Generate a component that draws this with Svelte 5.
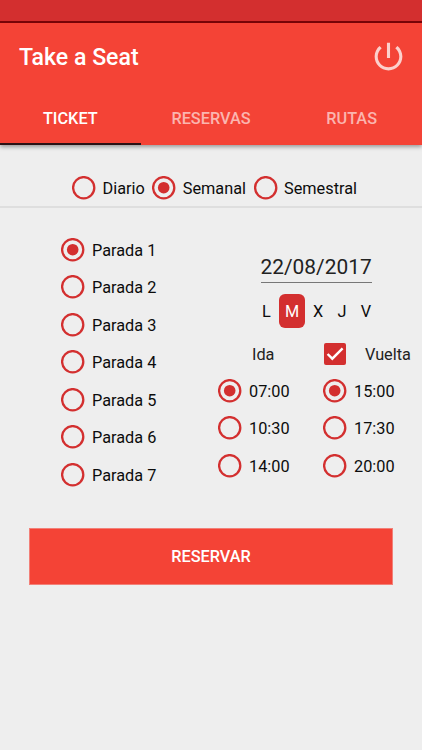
<script lang="ts">
	const tabs = ['TICKET', 'RESERVAS', 'RUTAS'];
	const periods = ['Diario', 'Semanal', 'Semestral'];
	const stops = [1, 2, 3, 4, 5, 6, 7].map((n) => `Parada ${n}`);
	const days = ['L', 'M', 'X', 'J', 'V'];
	const outbound = ['07:00', '10:30', '14:00'];
	const inbound = ['15:00', '17:30', '20:00'];

	let tab = $state('TICKET');
	let period = $state('Semanal');
	let stop = $state('Parada 1');
	let day = $state('M');
	let outboundTime = $state('07:00');
	let inboundTime = $state('15:00');
	let roundTrip = $state(true);
</script>

{#snippet radio(label: string, checked: boolean, select: () => void)}
	<button class="radio" role="radio" aria-checked={checked} onclick={select}>
		<svg class="radio-icon" viewBox="0 0 24 24" aria-hidden="true">
			<circle cx="11.7" cy="11.7" r="10.6" fill="none" stroke="currentColor" stroke-width="2.3" />
			{#if checked}
				<circle cx="11.7" cy="11.7" r="5.8" fill="currentColor" />
			{/if}
		</svg>
		<span class="radio-label">{label}</span>
	</button>
{/snippet}

<div class="screen">
	<div class="status-bar"></div>

	<header>
		<div class="toolbar">
			<h1>Take a Seat</h1>
			<button class="power" aria-label="Salir">
				<svg viewBox="0 0 24 24" fill="currentColor" aria-hidden="true">
					<path d="M13 3h-2v10h2V3zm4.83 2.17l-1.42 1.42C17.99 7.86 19 9.81 19 12c0 3.87-3.13 7-7 7s-7-3.13-7-7c0-2.19 1.01-4.14 2.58-5.42L6.17 5.17C4.23 6.82 3 9.26 3 12c0 4.97 4.03 9 9 9s9-4.03 9-9c0-2.74-1.23-5.18-3.17-6.83z" />
				</svg>
			</button>
		</div>
		<nav>
			{#each tabs as name}
				<button class="tab" class:active={tab === name} onclick={() => (tab = name)}>{name}</button>
			{/each}
		</nav>
	</header>

	<div class="periods" role="radiogroup">
		{#each periods as name}
			{@render radio(name, period === name, () => (period = name))}
		{/each}
	</div>

	<main>
		<div class="stops" role="radiogroup">
			{#each stops as name}
				{@render radio(name, stop === name, () => (stop = name))}
			{/each}
		</div>

		<div class="schedule">
			<div class="date">22/08/2017</div>

			<div class="days">
				{#each days as name}
					<button class="day" class:selected={day === name} onclick={() => (day = name)}>{name}</button>
				{/each}
			</div>

			<div class="trips">
				<div class="trip-title outbound">Ida</div>
				<button
					class="trip-title check"
					role="checkbox"
					aria-checked={roundTrip}
					onclick={() => (roundTrip = !roundTrip)}
				>
					<span class="box" class:checked={roundTrip}>
						{#if roundTrip}
							<svg viewBox="0 0 22 22" aria-hidden="true">
								<path d="M3.6 11l4.7 4.7L18.6 5.4" fill="none" stroke="#fff" stroke-width="2.4" />
							</svg>
						{/if}
					</span>
					<span class="check-label">Vuelta</span>
				</button>

				<div class="times" role="radiogroup">
					{#each outbound as time}
						{@render radio(time, outboundTime === time, () => (outboundTime = time))}
					{/each}
				</div>
				<div class="times" role="radiogroup">
					{#each inbound as time}
						{@render radio(time, inboundTime === time, () => (inboundTime = time))}
					{/each}
				</div>
			</div>
		</div>
	</main>

	<button class="submit">RESERVAR</button>
</div>

<style>
	:global(body) {
		background: #eee;
	}

	.screen {
		height: 750px;
		overflow: hidden;
		background: #eee;
		color: #0c0c0c;
		font-family: Roboto, sans-serif;
		font-size: 16.3px;
		line-height: 20px;
	}

	button {
		margin: 0;
		padding: 0;
		border: 0;
		background: none;
		color: inherit;
		font: inherit;
		white-space: nowrap;
		cursor: pointer;
	}

	.status-bar {
		box-sizing: border-box;
		height: 23px;
		background: #d32f2f;
		border-bottom: 2px solid #7a0508;
	}

	header {
		background: #f44336;
		color: #fff;
		box-shadow: 0 2px 4px rgba(0, 0, 0, 0.35);
	}

	.toolbar {
		display: flex;
		align-items: center;
		justify-content: space-between;
		height: 68px;
		padding: 0 15px 0 19px;
	}

	h1 {
		margin: 2px 0 0;
		font-size: 23.1px;
		font-weight: 500;
	}

	.power {
		width: 37px;
		height: 37px;
		margin-bottom: 2px;
		color: #fcd0cc;
	}

	.power svg {
		display: block;
	}

	nav {
		display: grid;
		grid-template-columns: repeat(3, 1fr);
		height: 54px;
	}

	.tab {
		padding-top: 3px;
		border-bottom: 2px solid transparent;
		color: #fbb5af;
		font-weight: 500;
	}

	.tab.active {
		border-bottom-color: #2b1215;
		color: #fff;
	}

	.radio {
		display: flex;
		align-items: center;
		gap: 7px;
		text-align: left;
	}

	.radio-icon {
		flex: none;
		width: 24px;
		height: 24px;
		color: #d32f2f;
	}

	.radio-label,
	.check-label {
		padding-top: 2px;
	}

	.periods {
		display: flex;
		gap: 7.5px;
		height: 61px;
		padding: 0 0 0 72px;
		border-bottom: 2px solid #dedede;
	}

	.periods .radio {
		gap: 6.5px;
		height: 37px;
		margin-top: 24px;
	}

	main {
		display: flex;
		height: 320px;
	}

	.stops {
		width: 157px;
		padding: 23px 0 0 61px;
	}

	.stops .radio,
	.times .radio {
		height: 37.5px;
	}

	.schedule {
		display: flex;
		flex-direction: column;
		width: 204px;
		padding-top: 48px;
	}

	.date {
		align-self: center;
		width: 111px;
		margin-left: -8px;
		padding-bottom: 4px;
		border-bottom: 1px solid #777;
		color: #222;
		font-size: 20.9px;
		line-height: 22px;
		text-align: center;
	}

	.days {
		display: grid;
		grid-template-columns: 25px 26px 26px 22px 26px;
		height: 34px;
		margin: 11px 0 0 36px;
	}

	.day {
		padding-top: 2px;
	}

	.day.selected {
		border-radius: 6px;
		background: #d32f2f;
		color: #fff;
	}

	.trips {
		display: grid;
		grid-template-columns: 105px 1fr;
		margin-top: 8px;
	}

	.trip-title {
		height: 36px;
		color: #222;
	}

	.outbound {
		padding-left: 34px;
		line-height: 38px;
	}

	.check {
		display: flex;
		align-items: center;
		gap: 19px;
		padding-left: 1px;
	}

	.box {
		box-sizing: border-box;
		width: 22px;
		height: 22px;
		border: 2px solid #d32f2f;
		border-radius: 2px;
	}

	.box.checked {
		border: 0;
		background: #d32f2f;
	}

	.box svg {
		display: block;
	}

	.submit {
		display: block;
		width: 364px;
		height: 57px;
		margin: 0 auto;
		padding-top: 1px;
		border: 1px solid #f28078;
		background: #f44336;
		color: #fff;
		font-weight: 500;
	}
</style>
